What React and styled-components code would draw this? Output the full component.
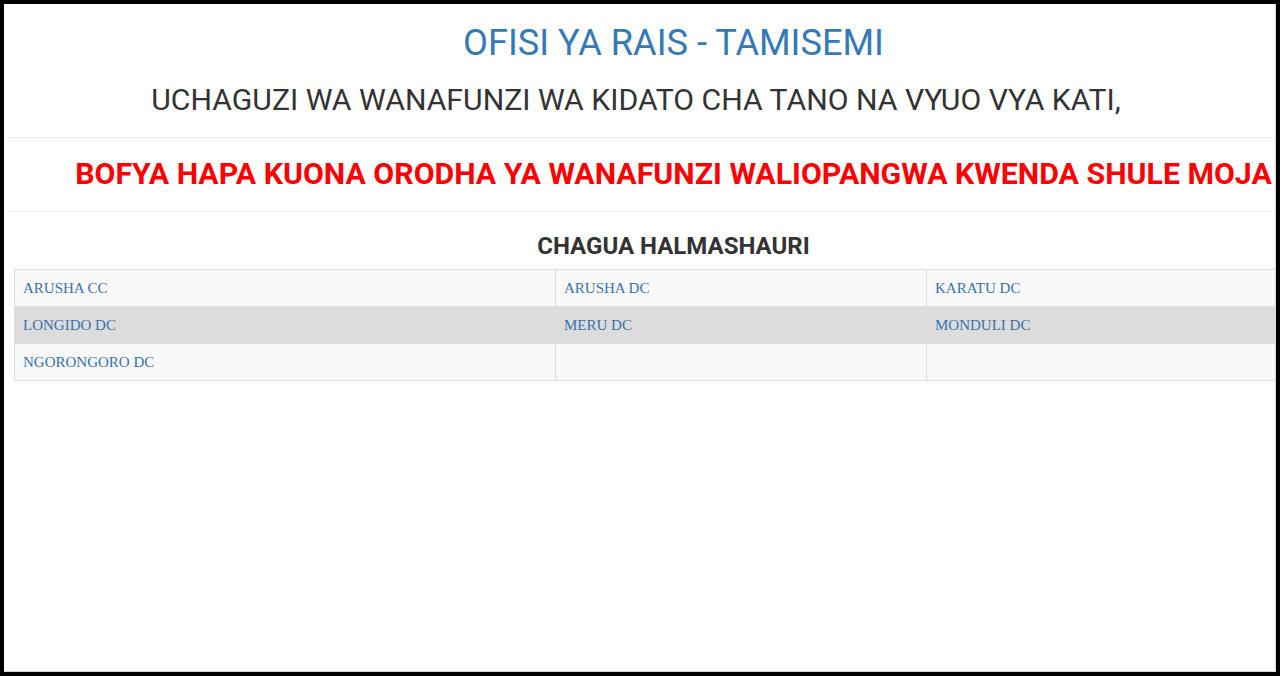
import styled, { createGlobalStyle } from "styled-components";

const halmashauri = [
    ["ARUSHA CC", "ARUSHA DC", "KARATU DC"],
    ["LONGIDO DC", "MERU DC", "MONDULI DC"],
    ["NGORONGORO DC", "", ""],
];

const GlobalStyle = createGlobalStyle`
    html, body, #root {
        height: 100%;
    }
    body {
        margin: 0;
        padding: 4px;
        box-sizing: border-box;
        background: #000;
        font-family: Roboto, "Liberation Sans", sans-serif;
    }
`;

export default function App() {
    return (
        <>
            <GlobalStyle />
            <Page>
                <Content>
                    <Title>OFISI YA RAIS - TAMISEMI</Title>
                    <SubTitle>UCHAGUZI WA WANAFUNZI WA KIDATO CHA TANO NA VYUO VYA KATI,</SubTitle>
                    <Divider />
                    <Notice href="#">BOFYA HAPA KUONA ORODHA YA WANAFUNZI WALIOPANGWA KWENDA SHULE MOJA</Notice>
                    <Divider />
                    <Heading>CHAGUA HALMASHAURI</Heading>
                    <Table>
                        {halmashauri.map((row, i) => (
                            <Row key={i} shaded={i === 1}>
                                {row.map((name, j) => (
                                    <Cell key={j}>{name && <CellLink href="#">{name}</CellLink>}</Cell>
                                ))}
                            </Row>
                        ))}
                    </Table>
                </Content>
            </Page>
        </>
    );
}

const Page = styled.div`
    height: 100%;
    background: #fff;
    border-right: 1px solid #d6d6d6;
    border-bottom: 1px solid #d6d6d6;
    box-sizing: border-box;
    overflow: hidden;
`;

const Content = styled.div`
    width: 1339px;
    display: flex;
    flex-direction: column;
    align-items: center;
    padding-top: 20px;
`;

const Title = styled.h2`
    margin: 0;
    font-size: 36.2px;
    line-height: 38px;
    font-weight: 400;
    color: #337ab7;
`;

const SubTitle = styled.h3`
    margin: 21px 0 0;
    padding-right: 75px;
    font-size: 30.2px;
    line-height: 34px;
    font-weight: 400;
    color: #333;
`;

const Divider = styled.hr`
    align-self: stretch;
    width: 1268px;
    margin: 20px 0 0 2px;
    border: 0;
    border-top: 1px solid #eee;
`;

const Notice = styled.a`
    margin-top: 19px;
    font-size: 30.3px;
    line-height: 34px;
    font-weight: 700;
    color: #f00;
    text-decoration: none;
    white-space: nowrap;
`;

const Heading = styled.h4`
    margin: 20px 0 0;
    font-size: 24px;
    line-height: 28px;
    font-weight: 700;
    color: #333;
`;

const Table = styled.div`
    align-self: stretch;
    margin: 9px 10px 0;
    border: 1px solid #ddd;
    border-bottom: 0;
`;

const Row = styled.div`
    display: grid;
    grid-template-columns: 540px 371px 1fr;
    background: ${({ shaded }) => (shaded ? "#dcdcdc" : "#f9f9f9")};
    border-bottom: 1px solid #ddd;
`;

const Cell = styled.div`
    height: 36px;
    padding: 0 8px;
    display: flex;
    align-items: center;
    & + & {
        border-left: 1px solid #ddd;
    }
`;

const CellLink = styled.a`
    font-family: "Liberation Serif", serif;
    font-size: 15px;
    color: #3a72ac;
    text-decoration: none;
`;
